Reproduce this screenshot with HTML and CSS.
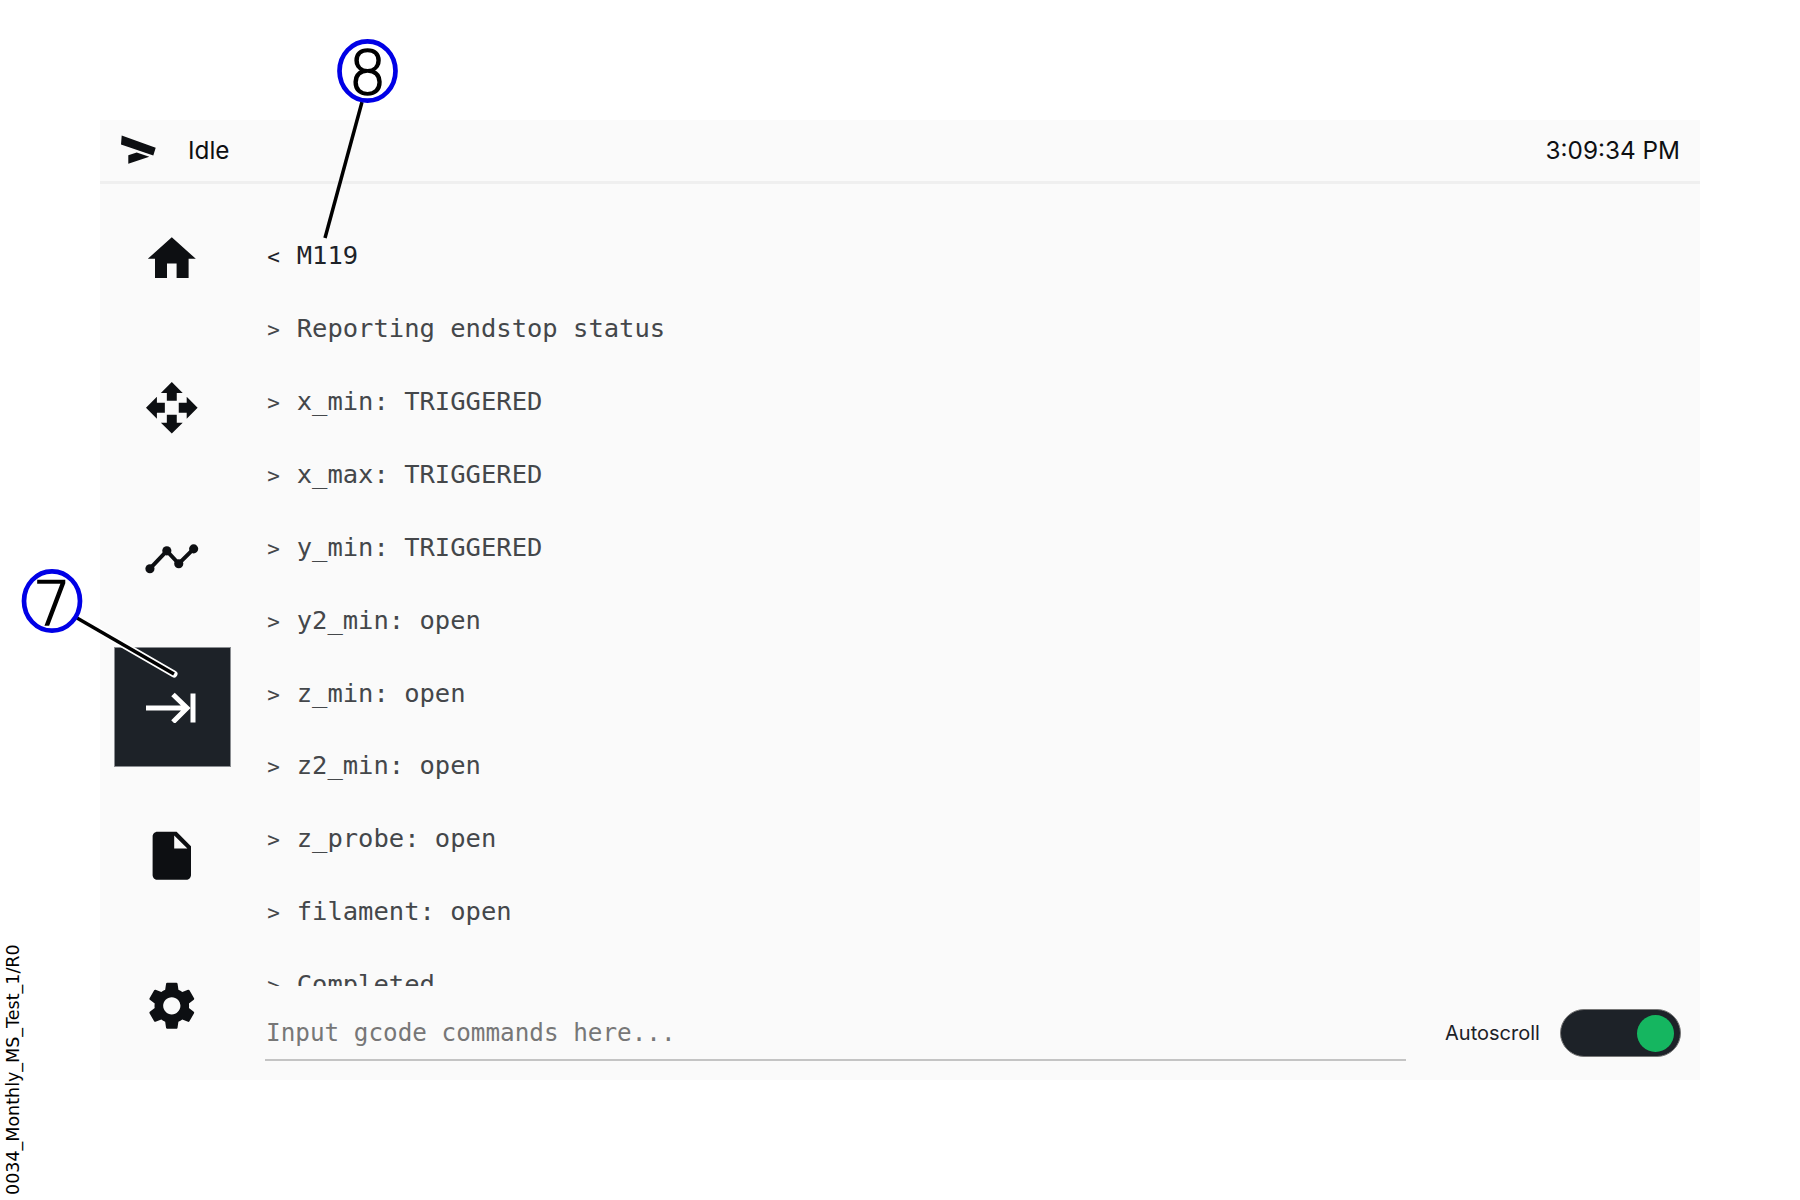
FILE: index.html
```html
<!DOCTYPE html>
<html lang="en">
<head>
<meta charset="utf-8">
<title>Console</title>
<link rel="stylesheet" href="styles.css">
</head>
<body>
<main class="panel">
  <header class="topbar">
    <svg class="logo" viewBox="0 0 36 30"><path d="M1.700 .5 35.700 12.800 33.300 20.500 1 9.500ZM8.300 20.200 16.700 17.500 29.300 21.800 8.300 28.800Z"/></svg>
    <span class="status">Idle</span>
    <span class="clock">3:09:34 PM</span>
  </header>
  <div class="body">
    <nav class="sidebar">
      <div class="nav-item"><svg class="icon" viewBox="0 0 24 24"><path d="M10 20v-6h4v6h5v-8h3L12 3 2 12h3v8z"/></svg></div>
      <div class="nav-item"><svg class="icon" viewBox="-3 -3 58 58"><path d="M26 0 37 11H31V19H21V11H15ZM0 26 11 15V21H19V31H11V37ZM52 26 41 37V31H33V21H41V15ZM26 52 15 41H21V33H31V41H37Z"/></svg></div>
      <div class="nav-item"><svg class="icon" viewBox="-3 -3 58 58"><g class="graph"><path d="M4 37 21 19 33 32 48 17"/><circle cx="4" cy="37" r="4.600"/><circle cx="21" cy="19" r="4.600"/><circle cx="33" cy="32" r="4.600"/><circle cx="48" cy="17" r="4.600"/></g></svg></div>
      <div class="nav-item"><div class="nav-active"><svg class="icon-light" viewBox="0 0 52 32"><path class="arrow" d="M0 17H41M27 3.500 41 17 27 31"/><rect x="44.500" y="2.500" width="5" height="29"/></svg></div></div>
      <div class="nav-item"><svg class="icon" viewBox="0 0 24 24"><path d="M6 2c-1.100 0-1.990.9-1.990 2L4 20c0 1.100.89 2 1.990 2H18c1.100 0 2-.9 2-2V8l-6-6H6zm7 7V3.500L18.500 9H13z"/></svg></div>
      <div class="nav-item"><svg class="icon" viewBox="0 0 24 24"><path d="M19.140 12.940c.04-.3.06-.61.06-.94 0-.32-.02-.64-.07-.94l2.030-1.580c.18-.14.23-.41.12-.61l-1.920-3.320c-.12-.22-.37-.29-.59-.22l-2.390.96c-.5-.38-1.030-.7-1.620-.94l-.36-2.540c-.04-.24-.24-.41-.48-.41h-3.840c-.24 0-.43.17-.47.41l-.36 2.540c-.59.24-1.130.57-1.620.94l-2.390-.96c-.22-.08-.47 0-.59.22L2.740 8.870c-.12.21-.08.47.12.61l2.030 1.580c-.05.3-.09.63-.09.94s.02.64.07.94l-2.030 1.580c-.18.14-.23.41-.12.61l1.920 3.320c.12.22.37.29.59.22l2.390-.96c.5.38 1.030.7 1.620.94l.36 2.540c.05.24.24.41.48.41h3.840c.24 0 .44-.17.47-.41l.36-2.540c.59-.24 1.130-.56 1.620-.94l2.390.96c.22.08.47 0 .59-.22l1.920-3.320c.12-.22.07-.47-.12-.61l-2.010-1.580zM12 15.600c-1.980 0-3.600-1.620-3.600-3.600s1.620-3.600 3.600-3.600 3.600 1.620 3.600 3.600-1.620 3.600-3.600 3.600z"/></svg></div>
    </nav>
    <section class="console">
      <div class="log">
        <p class="line line-sent"><span class="prompt">&lt;</span> M119</p>
        <p class="line"><span class="prompt">&gt;</span> Reporting endstop status</p>
        <p class="line"><span class="prompt">&gt;</span> x_min: TRIGGERED</p>
        <p class="line"><span class="prompt">&gt;</span> x_max: TRIGGERED</p>
        <p class="line"><span class="prompt">&gt;</span> y_min: TRIGGERED</p>
        <p class="line"><span class="prompt">&gt;</span> y2_min: open</p>
        <p class="line"><span class="prompt">&gt;</span> z_min: open</p>
        <p class="line"><span class="prompt">&gt;</span> z2_min: open</p>
        <p class="line"><span class="prompt">&gt;</span> z_probe: open</p>
        <p class="line"><span class="prompt">&gt;</span> filament: open</p>
        <p class="line"><span class="prompt">&gt;</span> Completed</p>
      </div>
      <div class="controls">
        <div class="gcode">Input gcode commands here...</div>
        <span class="auto-label">Autoscroll</span>
        <div class="toggle"><span class="knob"></span></div>
      </div>
    </section>
  </div>
</main>
<svg class="callouts" viewBox="0 0 1800 1200">
  <path class="leader-halo" d="M77 618 174 674"/>
  <path class="leader" d="M77 618 174 674"/>
  <path class="leader" d="M362 102 325 238"/>
  <ellipse class="bubble" cx="52" cy="601" rx="28" ry="29.700"/>
  <ellipse class="bubble" cx="367.500" cy="71" rx="28" ry="29.700"/>
  <text class="bubble-num" x="52" y="625">7</text>
  <text class="bubble-num" x="367.500" y="93.500">8</text>
</svg>
<div class="doc-ref">0034_Monthly_MS_Test_1/R0</div>
</body>
</html>
```
FILE: styles.css
```css
* { box-sizing: border-box; }
html, body { margin: 0; height: 1200px; background: #fff; overflow: hidden; }
body { padding: 120px 100px 0; font-family: Inter, "Liberation Sans", sans-serif; color: #0d0f12; }
.panel { width: 1600px; height: 960px; background: #fafafa; display: flex; flex-direction: column; }
.topbar { height: 64px; flex: none; display: flex; align-items: center; padding: 0 20px 2px; border-bottom: 3px solid #efefef; font-size: 24.3px; }
.logo { width: 36px; height: 30px; fill: #0d0f12; flex: none; }
.status { margin-left: 32px; }
.clock { margin-left: auto; }
.body { flex: 1; display: flex; min-height: 0; }
.sidebar { width: 165px; flex: none; display: flex; flex-direction: column; padding-left: 14px; }
.nav-item { flex: 1; width: 117px; display: flex; align-items: center; justify-content: center; }
.nav-active { width: 117px; height: 120px; background: #1d2228; border: 1px solid #8a8d91; display: flex; align-items: center; justify-content: center; }
.icon { width: 57.6px; height: 57.6px; fill: #0d0f12; margin-right: 1px; }
.icon-light { width: 52px; height: 32px; fill: #fff; margin-right: 1px; }
.arrow { fill: none; stroke: #fff; stroke-width: 5; }
.graph path { fill: none; stroke: #0d0f12; stroke-width: 4; }
.console { flex: 1; min-width: 0; display: flex; flex-direction: column; padding: 0 18px 0 0; }
.log { height: 802px; flex: none; overflow: hidden; padding-top: 35.2px; font-family: "DejaVu Sans Mono", monospace; font-size: 25.5px; color: #44474a; }
.line { margin: 0; height: 72.9px; line-height: 72.9px; white-space: pre; padding-left: 1px; }
.line-sent { color: #1d2228; }
.prompt { display: inline-block; width: 15.35px; font-size: 21px; text-align: center; }
.controls { flex: 1; display: flex; align-items: flex-start; padding-top: 22px; }
.gcode { width: 1141px; height: 53px; border-bottom: 2px solid #c4c4c4; font-family: "DejaVu Sans Mono", monospace; font-size: 24.3px; line-height: 50px; padding-left: 1px; color: #777; }
.auto-label { margin: 1px 0 0 39px; font-size: 20px; line-height: 48px; color: #1d2228; width: 115px; }
.toggle { margin-top: 1px; width: 121px; height: 48px; border-radius: 24px; background: #1d2228; border: 1px solid #777; display: flex; align-items: center; justify-content: flex-end; padding-right: 6px; }
.knob { width: 37px; height: 37px; border-radius: 50%; background: #15b660; }
.callouts { position: absolute; left: 0; top: 0; width: 1800px; height: 1200px; pointer-events: none; }
.leader { stroke: #000; stroke-width: 3.5; fill: none; }
.leader-halo { stroke: #fff; stroke-width: 7; stroke-linecap: round; fill: none; }
.bubble { fill: none; stroke: #0000e6; stroke-width: 4.7; }
.bubble-num { font-family: "DejaVu Sans Light", "DejaVu Sans", sans-serif; font-weight: 200; font-size: 60px; text-anchor: middle; fill: #000; stroke: #000; stroke-width: 1.5; }
.doc-ref { position: absolute; left: 3px; top: 945px; height: 250px; writing-mode: vertical-rl; transform: rotate(180deg); font-family: "DejaVu Sans", sans-serif; font-size: 17.5px; line-height: 20px; color: #000; text-align: left; white-space: nowrap; }
```
